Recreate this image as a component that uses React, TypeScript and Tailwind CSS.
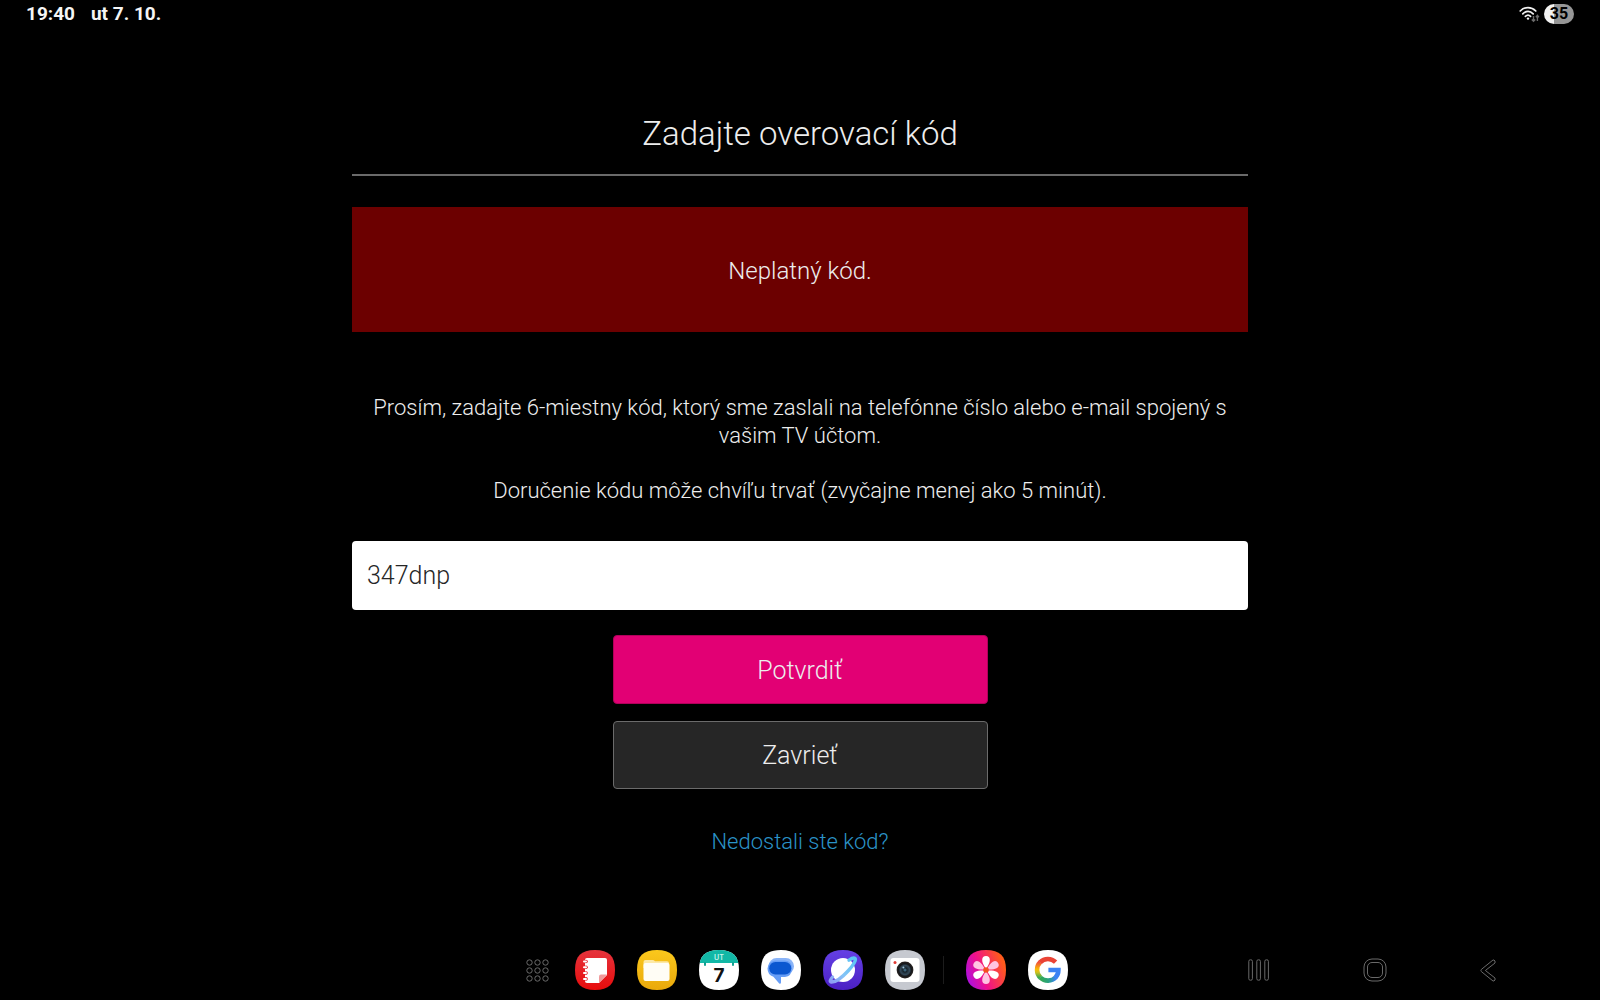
import { useState } from 'react';

const SQUIRCLE = 'M20 0C34 0 40 6 40 20S34 40 20 40 0 34 0 20 6 0 20 0Z';

function WifiIcon() {
  return (
    <svg width="21" height="18" viewBox="0 0 21 18" fill="none" aria-hidden="true">
      <g stroke="#f2f2f2" strokeWidth="1.7" strokeLinecap="round">
        <path d="M1.2 6C5.6 1.4 12.4 1.4 16.8 6" />
        <path d="M3.8 8.8C7 5.5 11 5.5 14.2 8.8" />
        <path d="M6.4 11.4C8 9.8 10 9.8 11.6 11.4" />
      </g>
      <circle cx="9" cy="13.6" r="1.2" fill="#f2f2f2" />
      <g stroke="#6b6b6b" strokeWidth="1.4">
        <path d="M14.5 11V16M12.8 14.4L14.5 16.2L16.2 14.4" />
        <path d="M18.4 16V10.6M16.9 12.2L18.4 10.4L19.9 12.2" />
      </g>
    </svg>
  );
}

function AppsGridIcon() {
  const steps = [3.5, 11.5, 19.5];
  return (
    <svg width="23" height="23" viewBox="0 0 23 23" fill="none" aria-hidden="true">
      {steps.map((y) =>
        steps.map((x) => <circle key={`${x}-${y}`} cx={x} cy={y} r="2.7" stroke="#6a6a6a" />)
      )}
    </svg>
  );
}

function NotesIcon() {
  return (
    <svg width="40" height="40" viewBox="0 0 40 40" aria-hidden="true">
      <defs>
        <linearGradient id="notes" x1="0" y1="0" x2="0" y2="1">
          <stop stopColor="#e5333c" />
          <stop offset="1" stopColor="#e80c0c" />
        </linearGradient>
      </defs>
      <path d={SQUIRCLE} fill="url(#notes)" />
      <path d="M12 8H30Q32 8 32 10V25L24 33H12Q10 33 10 31V10Q10 8 12 8Z" fill="#fff" />
      {[11.5, 17.3, 23.1, 28.9].map((y) => (
        <g key={y}>
          <circle cx="11" cy={y} r="1.8" fill="#e5202a" />
          <rect x="8" y={y - 1} width="4" height="2" rx="1" fill="#fff" />
        </g>
      ))}
      <path d="M32 24.5H26Q24 24.5 24 26.5V33Z" fill="#f09a9c" />
    </svg>
  );
}

function FilesIcon() {
  return (
    <svg width="40" height="40" viewBox="0 0 40 40" aria-hidden="true">
      <defs>
        <linearGradient id="files" x1="0" y1="0" x2="0" y2="1">
          <stop stopColor="#fbc81c" />
          <stop offset="1" stopColor="#eaa90b" />
        </linearGradient>
      </defs>
      <path d={SQUIRCLE} fill="url(#files)" />
      <path d="M6.5 12Q6.5 10 8.5 10H15.5Q17 10 18 11.3H30Q32 11.3 32 13.3V18H6.5Z" fill="#fde9a6" />
      <rect x="6.5" y="13" width="26" height="18" rx="2" fill="#fffdf5" />
    </svg>
  );
}

function CalendarIcon() {
  return (
    <svg width="40" height="40" viewBox="0 0 40 40" aria-hidden="true">
      <clipPath id="calendar">
        <path d={SQUIRCLE} />
      </clipPath>
      <g clipPath="url(#calendar)">
        <rect width="40" height="40" fill="#fff" />
        <rect width="40" height="13" fill="#12b8a6" />
        <rect x="5" y="12" width="2" height="4" rx="1" fill="#12a092" />
        <rect x="33" y="12" width="2" height="4" rx="1" fill="#12a092" />
      </g>
      <text x="20" y="10" textAnchor="middle" fill="#c9f3ec" className="font-['Inter',sans-serif] text-[7px] font-semibold">
        UT
      </text>
      <text x="20" y="32" textAnchor="middle" fill="#111" className="font-['Inter',sans-serif] text-[19px] font-bold">
        7
      </text>
    </svg>
  );
}

function MessagesIcon() {
  return (
    <svg width="40" height="40" viewBox="0 0 40 40" aria-hidden="true">
      <path d={SQUIRCLE} fill="#fff" />
      <rect x="7.5" y="8" width="25.5" height="16.5" rx="8.2" fill="#8ab4f8" />
      <path d="M14 10.5H24Q31 11 31 18.5Q30.5 26.5 24 27H20V32.6Q19.6 34.6 18 33.2L12.4 26.8Q6.6 25 6.5 18.5Q7 11.5 14 10.5Z" fill="#669df6" />
      <rect x="8.2" y="12" width="22" height="12.5" rx="6.2" fill="#0b57d0" />
    </svg>
  );
}

function BrowserIcon() {
  return (
    <svg width="40" height="40" viewBox="0 0 40 40" aria-hidden="true">
      <defs>
        <linearGradient id="browser" x1="0" y1="0" x2="0" y2="1">
          <stop stopColor="#6440e4" />
          <stop offset="1" stopColor="#4b20c4" />
        </linearGradient>
        <linearGradient id="orbit" x1="0" y1="1" x2="1" y2="0">
          <stop stopColor="#8f9cf5" />
          <stop offset="0.4" stopColor="#84c4f6" />
          <stop offset="1" stopColor="#59c5f5" />
        </linearGradient>
      </defs>
      <path d={SQUIRCLE} fill="url(#browser)" />
      <circle cx="20" cy="20" r="12" fill="#fff" />
      <path
        d="M9.5 27C7 30 6.7 31.6 8.2 32C12 32.4 19 27.5 25 21C30.5 15 33.6 9.8 32 8.4C30.6 7.4 28 8.8 26 10.2"
        fill="none"
        stroke="url(#orbit)"
        strokeWidth="3.4"
        strokeLinecap="round"
      />
    </svg>
  );
}

function CameraIcon() {
  return (
    <svg width="40" height="40" viewBox="0 0 40 40" aria-hidden="true">
      <defs>
        <radialGradient id="lens">
          <stop stopColor="#4c84a4" />
          <stop offset="0.25" stopColor="#17242e" />
          <stop offset="0.55" stopColor="#33495a" />
          <stop offset="0.75" stopColor="#14161a" />
          <stop offset="1" stopColor="#282321" />
        </radialGradient>
      </defs>
      <path d={SQUIRCLE} fill="#c6c9d0" />
      <rect x="5.5" y="8" width="29" height="24" rx="3" fill="#fff" />
      <circle cx="10" cy="12.6" r="1.5" fill="#e03a34" />
      <circle cx="20" cy="20" r="8.4" fill="url(#lens)" />
      <circle cx="18.4" cy="17.6" r="1" fill="#9fc6dc" />
    </svg>
  );
}

function GalleryIcon() {
  return (
    <svg width="40" height="40" viewBox="0 0 40 40" aria-hidden="true">
      <defs>
        <linearGradient id="gallery" x1="0" y1="0.9" x2="1" y2="0.5">
          <stop stopColor="#a010f0" />
          <stop offset="0.45" stopColor="#f0108c" />
          <stop offset="1" stopColor="#ff5a1c" />
        </linearGradient>
      </defs>
      <path d={SQUIRCLE} fill="url(#gallery)" />
      {[0, 60, 120, 180, 240, 300].map((angle) => (
        <path
          key={angle}
          d="M20 19C17.5 15 16.2 12.5 16.2 10A3.8 4 0 0 1 23.8 10C23.8 12.5 22.5 15 20 19Z"
          transform={`rotate(${angle} 20 20)`}
          fill={angle % 120 === 0 ? '#fff' : '#ffc4e2'}
        />
      ))}
      <circle cx="20" cy="20" r="2.8" fill="#f4511e" />
    </svg>
  );
}

function GoogleIcon() {
  return (
    <svg width="40" height="40" viewBox="0 0 40 40" aria-hidden="true">
      <defs>
        <linearGradient id="g-left" x1="0" y1="0" x2="0" y2="1">
          <stop stopColor="#f0503c" />
          <stop offset="0.45" stopColor="#fbbc04" />
          <stop offset="0.65" stopColor="#d0c020" />
          <stop offset="1" stopColor="#34a853" />
        </linearGradient>
        <linearGradient id="g-bottom" x1="0" y1="0" x2="1" y2="0">
          <stop stopColor="#34a853" />
          <stop offset="0.5" stopColor="#2aa37c" />
          <stop offset="1" stopColor="#3b82f4" />
        </linearGradient>
      </defs>
      <path d={SQUIRCLE} fill="#fff" />
      <g fill="none" strokeWidth="4.6">
        <path d="M12.2 12.2A10.8 10.8 0 0 0 12.6 27.8" stroke="url(#g-left)" />
        <path d="M12.1 12.4A10.8 10.8 0 0 1 27.6 12.2" stroke="#ea4335" />
        <path d="M12.4 27.6A10.8 10.8 0 0 0 27.8 27.2" stroke="url(#g-bottom)" />
        <path d="M27.4 27.6C29.4 25.6 30.4 23 30.4 20H20.4" stroke="#3b82f4" />
      </g>
    </svg>
  );
}

function RecentsIcon() {
  return (
    <svg width="22" height="22" viewBox="0 0 22 22" fill="none" stroke="#6a6a6a" aria-hidden="true">
      <rect x="0.8" y="0.8" width="3.6" height="20.4" rx="1.5" />
      <rect x="8.8" y="0.8" width="3.6" height="20.4" rx="1.5" />
      <rect x="16.8" y="0.8" width="3.6" height="20.4" rx="1.5" />
    </svg>
  );
}

function HomeIcon() {
  return (
    <svg width="24" height="24" viewBox="0 0 24 24" fill="none" stroke="#6a6a6a" aria-hidden="true">
      <rect x="1" y="1" width="22" height="22" rx="8" />
      <rect x="4.5" y="4.5" width="15" height="15" rx="4.5" />
    </svg>
  );
}

function BackIcon() {
  return (
    <svg width="16" height="23" viewBox="0 0 16 23" fill="none" stroke="#6a6a6a" aria-hidden="true">
      <path d="M13 1L1.4 10.4Q0.4 11.5 1.4 12.6L13 22Q14 22.4 15 21V19L5.4 11.5L15 4V2Q14 0.6 13 1Z" />
    </svg>
  );
}

const apps = [
  { name: 'Notes', icon: <NotesIcon /> },
  { name: 'Files', icon: <FilesIcon /> },
  { name: 'Calendar', icon: <CalendarIcon /> },
  { name: 'Messages', icon: <MessagesIcon /> },
  { name: 'Browser', icon: <BrowserIcon /> },
  { name: 'Camera', icon: <CameraIcon /> },
];

const recentApps = [
  { name: 'Gallery', icon: <GalleryIcon /> },
  { name: 'Google', icon: <GoogleIcon /> },
];

function StatusBar() {
  return (
    <header className="flex h-7 items-center justify-between px-[26px] font-['Roboto',sans-serif] text-[19px] font-bold text-[#f5f5f5]">
      <div className="flex gap-4">
        <span>19:40</span>
        <span>ut 7. 10.</span>
      </div>
      <div className="flex items-center gap-1">
        <WifiIcon />
        <span className="flex h-5 w-[30px] items-center justify-center rounded-full bg-linear-to-r from-[#f2f2f2] from-35% to-[#969696] to-35% text-base text-black">
          35
        </span>
      </div>
    </header>
  );
}

function Taskbar() {
  return (
    <footer className="flex h-[60px] items-center">
      <div className="flex-1" />
      <div className="flex items-center gap-[22px] pr-1.5">
        <button type="button" aria-label="Apps" className="pr-1">
          <AppsGridIcon />
        </button>
        {apps.map((app) => (
          <button key={app.name} type="button" aria-label={app.name}>
            {app.icon}
          </button>
        ))}
        <div className="-ml-1 h-7 w-px bg-[#1c1c1c]" />
        {recentApps.map((app) => (
          <button key={app.name} type="button" aria-label={app.name}>
            {app.icon}
          </button>
        ))}
      </div>
      <div className="flex-1">
        <nav className="flex items-center justify-end gap-[93px] pr-[104px]">
          <button type="button" aria-label="Recents">
            <RecentsIcon />
          </button>
          <button type="button" aria-label="Home">
            <HomeIcon />
          </button>
          <button type="button" aria-label="Back">
            <BackIcon />
          </button>
        </nav>
      </div>
    </footer>
  );
}

export default function App() {
  const [code, setCode] = useState('347dnp');

  return (
    <div className="flex min-h-screen flex-col bg-black font-['Roboto',sans-serif] font-light text-[#ededed]">
      <StatusBar />
      <main className="mx-auto flex w-full max-w-4xl flex-1 flex-col items-center pt-[82px]">
        <h1 className="w-full border-b-2 border-[#6a6a6a] pb-4 text-center text-[33px] leading-12">
          Zadajte overovací kód
        </h1>
        <div role="alert" className="mt-[31px] flex h-[125px] w-full items-center justify-center bg-[#6c0000] pt-0.5 text-2xl">
          Neplatný kód.
        </div>
        <form className="flex w-full flex-col items-center" onSubmit={(e) => e.preventDefault()}>
          <label htmlFor="code" className="mt-[62px] w-full px-5 text-center text-[22px] leading-[28px]">
            <span className="block">
              Prosím, zadajte 6-miestny kód, ktorý sme zaslali na telefónne číslo alebo e-mail spojený s vašim TV účtom.
            </span>
            <span className="mt-[27px] block">Doručenie kódu môže chvíľu trvať (zvyčajne menej ako 5 minút).</span>
          </label>
          <input
            id="code"
            type="text"
            value={code}
            onChange={(e) => setCode(e.target.value)}
            className="mt-9 h-[69px] w-full rounded bg-white px-[15px] text-[25px] text-[#262626] outline-none"
          />
          <button
            type="submit"
            className="mt-[25px] h-[69px] w-[375px] rounded border border-[#b0005a] bg-[#e20074] pt-0.5 text-[25px]"
          >
            Potvrdiť
          </button>
          <button
            type="button"
            className="mt-[17px] h-[68px] w-[375px] rounded border border-[#6b6b6b] bg-[#262626] pt-0.5 text-[25px]"
          >
            Zavrieť
          </button>
        </form>
        <a href="#resend" className="mt-[37px] text-[22px] leading-8 text-[#2b93c8]">
          Nedostali ste kód?
        </a>
      </main>
      <Taskbar />
    </div>
  );
}
